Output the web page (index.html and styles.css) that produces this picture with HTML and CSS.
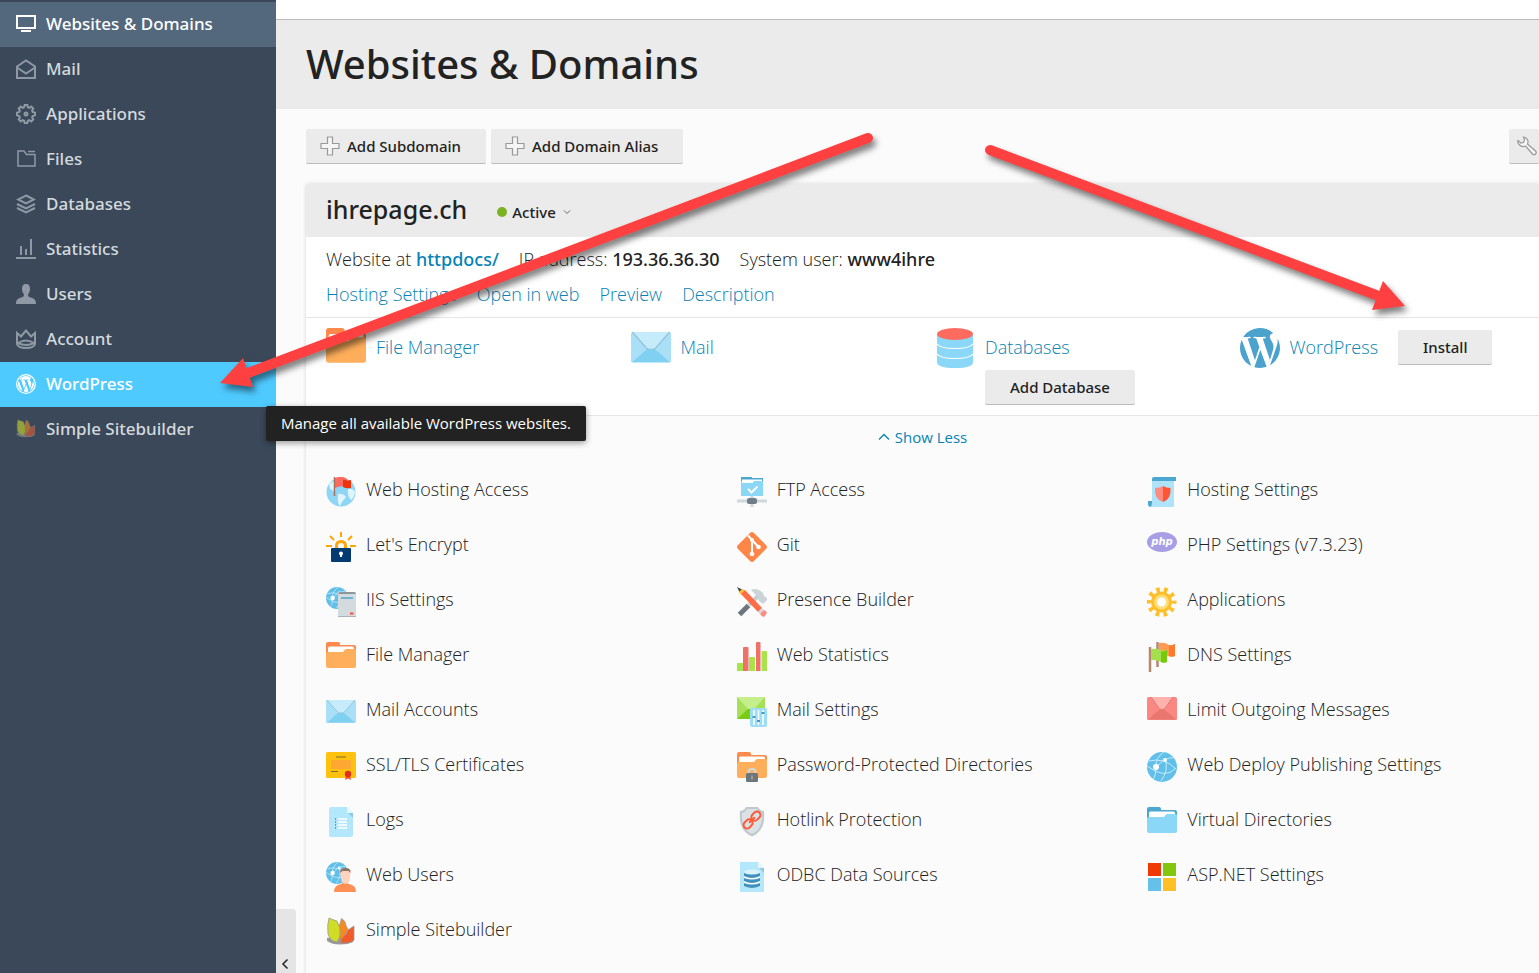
FILE: index.html
```html
<!DOCTYPE html>
<html lang="en">
<head>
  <meta charset="UTF-8" />
  <title>Websites &amp; Domains</title>
  <meta name="viewport" content="width=device-width, initial-scale=1.0"/>
  <link rel="stylesheet" href="styles.css">
</head>
<body>

<!-- Shared icons -->
<svg class="sprite" aria-hidden="true">
  <symbol id="i-folder" viewBox="0 0 30 30">
    <path d="M0 2q0-2 2-2h10q2 0 2 2v1h14q2 0 2 2v8H0z" fill="#ff8a4c"/>
    <path d="M2 6q0-1.500 1.500-1.500h23q1.500 0 1.500 1.500v6H2z" fill="#fff"/>
    <path d="M0 11.500q0-1.500 1.500-1.500H17l2-2.500q.5-.5 1.500-.5h8q1.500 0 1.500 1.500V24q0 2-2 2H2q-2 0-2-2z" fill="#ffaf5b"/>
  </symbol>
  <symbol id="i-folder-blue" viewBox="0 0 30 30">
    <path d="M0 2q0-2 2-2h10q2 0 2 2v1h14q2 0 2 2v8H0z" fill="#4ba7cf"/>
    <path d="M2 6q0-1.500 1.500-1.500h23q1.500 0 1.500 1.500v6H2z" fill="#fff"/>
    <path d="M0 11.500q0-1.500 1.500-1.500H17l2-2.500q.5-.5 1.500-.5h8q1.500 0 1.500 1.500V24q0 2-2 2H2q-2 0-2-2z" fill="#8bd7f7"/>
  </symbol>
  <symbol id="i-mail" viewBox="0 0 30 30">
    <rect y="3" width="30" height="23" rx="1.500" fill="#a9e0f7"/>
    <path d="M1 25.500 12 16h6l11 9.500z" fill="#7fd0f1"/>
    <path d="M1 3h28L18.500 15.500h-7z" fill="#c6ebfb"/>
    <path d="M1 3 11.500 15q1 1 2 1h3q1 0 2-1L29 3" fill="none" stroke="#93c6da"/>
  </symbol>
  <symbol id="i-globe" viewBox="0 0 30 30">
    <circle cx="15" cy="15" r="15" fill="#60c0ea"/>
    <path d="M2 9Q17 5 29 17M0 14q18 14 29 2M9 15Q8 6 17 0M9 15q0 9-3 12M18 7q4 11-4 22M9 15 18 7M17 8q7-3 9-2" fill="none" stroke="#c9eaf9" stroke-width="1"/>
    <circle cx="9" cy="15" r="3" fill="#fff"/><circle cx="18" cy="8" r="2" fill="#fff"/>
  </symbol>
  <symbol id="i-leaves" viewBox="0 0 30 30">
    <path d="M1 21v3q5 3.500 13 3.500T27 25l1-3-8-4z" fill="#999"/>
    <path d="M15.500 1.500q4 2 4.500 7l2 4-7 13-3-12z" fill="#f58a1f" stroke="#999" stroke-width=".8"/>
    <path d="M3 1q4 2 8 3 4 7 3 14-1 5-3 7-7-1-9-8Q1 7 3 1z" fill="#cfdd27" stroke="#999" stroke-width=".8"/>
    <path d="M28 9v14q-4 4-14 3 0-4 6-9l2-4z" fill="#f15a29" stroke="#999" stroke-width=".8"/>
  </symbol>
  <symbol id="i-plus" viewBox="0 0 20 20">
    <path d="M7.500 1h5v6.500H19v5h-6.500V19h-5v-6.500H1v-5h6.500z" fill="#f5f5f5" stroke="#999" stroke-width="1.200"/>
  </symbol>
  <symbol id="i-wp" viewBox="1.200 1.200 21.600 21.600">
    <path fill="currentColor" d="M21.469 6.825c.84 1.537 1.318 3.300 1.318 5.175 0 3.979-2.156 7.456-5.363 9.325l3.295-9.527c.615-1.540.82-2.771.82-3.864 0-.405-.026-.78-.07-1.110m-7.981.105c.647-.03 1.232-.105 1.232-.105.582-.075.514-.93-.067-.899 0 0-1.755.135-2.880.135-1.064 0-2.850-.15-2.850-.15-.585-.03-.661.855-.075.885 0 0 .54.061 1.125.09l1.680 4.605-2.370 7.080L5.354 6.900c.649-.03 1.234-.1 1.234-.1.585-.075.516-.93-.065-.896 0 0-1.746.138-2.874.138-.2 0-.438-.008-.69-.015C4.911 3.150 8.235 1.215 12 1.215c2.809 0 5.365 1.072 7.286 2.833-.046-.003-.091-.009-.141-.009-1.060 0-1.812.923-1.812 1.914 0 .89.513 1.643 1.060 2.531.411.72.89 1.643.89 2.977 0 .915-.354 1.994-.821 3.479l-1.075 3.585-3.900-11.610zM12 22.784c-1.059 0-2.081-.153-3.048-.437l3.237-9.406 3.315 9.087c.024.053.05.101.078.149-1.120.393-2.325.607-3.582.607M1.211 12c0-1.564.336-3.050.935-4.390L7.290 21.709C3.694 19.960 1.212 16.271 1.211 12"/>
  </symbol>
</svg>

<div class="page">
  <nav class="sidebar">
    <a href="#" class="nav-item current">
      <svg class="nav-icon" viewBox="0 0 20 20"><path d="M1 2h18v12H1z" fill="none" stroke="#fff" stroke-width="2"/><path d="M5 17h10" stroke="#fff" stroke-width="2"/></svg>
      Websites &amp; Domains
    </a>
    <a href="#" class="nav-item">
      <svg class="nav-icon line" viewBox="0 0 20 20"><path d="M1 7.500 10 1.500l9 6V19H1zM1 8.500l9 6 9-6"/></svg>
      Mail
    </a>
    <a href="#" class="nav-item">
      <svg class="nav-icon line" viewBox="0 0 20 20"><path d="M8.700 1h2.600l.6 2.200 1.400.6 2-1.200 2 2-1.200 2 .6 1.400 2.300.7v2.600l-2.300.7-.6 1.400 1.200 2-2 2-2-1.200-1.400.6-.6 2.200H8.700l-.6-2.200-1.400-.6-2 1.200-2-2 1.200-2-.6-1.400L1 11.300V8.700L3.300 8l.6-1.400-1.200-2 2-2 2 1.200 1.400-.6z"/><circle cx="10" cy="10" r="1.500"/></svg>
      Applications
    </a>
    <a href="#" class="nav-item">
      <svg class="nav-icon line thin" viewBox="0 0 20 20"><path d="M2 2h6l2.500 3.500H19V17H2zM12 2.500h7"/></svg>
      Files
    </a>
    <a href="#" class="nav-item">
      <svg class="nav-icon line" viewBox="0 0 20 20"><path d="m10 1.500 8 4-8 4-8-4zM1 10l9 4.500 9-4.500M1 14l9 4.500 9-4.500"/></svg>
      Databases
    </a>
    <a href="#" class="nav-item">
      <svg class="nav-icon line" viewBox="0 0 20 20"><path d="M0 19h20M5 7v9M10 10v6M15 0v16"/></svg>
      Statistics
    </a>
    <a href="#" class="nav-item">
      <svg class="nav-icon" viewBox="0 0 20 20"><path d="M10 0c3 0 4 2 4 5 0 2.500-1 4-2 5.500 0 2 1 2.500 4 3.500 2.500.8 4 2 4 6H0c0-4 1.500-5.200 4-6 3-1 4-1.500 4-3.500C7 9 6 7.500 6 5c0-3 1-5 4-5z" fill="#8e99a5"/></svg>
      Users
    </a>
    <a href="#" class="nav-item">
      <svg class="nav-icon line" viewBox="0 0 20 20"><path d="m1 4 4 3.500 5-6 5 6L19 4v11q-1 4-9 4t-9-4zM2 14q8-5 16 0-8 4-16 0z"/></svg>
      Account
    </a>
    <a href="#" class="nav-item selected">
      <svg class="nav-icon" viewBox="0 0 24 24"><circle cx="12" cy="12" r="11.200" fill="none" stroke="#fff" stroke-width="1.600"/><use href="#i-wp" x="2.500" y="2.500" width="19" height="19"/></svg>
      WordPress
      <span class="tooltip" role="tooltip">Manage all available WordPress websites.</span>
    </a>
    <a href="#" class="nav-item">
      <svg class="nav-icon faded"><use href="#i-leaves"/></svg>
      Simple Sitebuilder
    </a>
  </nav>

  <main class="main">
    <div class="topbar"></div>
    <header class="heading">
      <h1>Websites &amp; Domains</h1>
    </header>

    <div class="toolbar">
      <button class="btn"><svg class="btn-icon"><use href="#i-plus"/></svg>Add Subdomain</button>
      <button class="btn"><svg class="btn-icon"><use href="#i-plus"/></svg>Add Domain Alias</button>
      <button class="btn settings" aria-label="Settings">
        <svg class="btn-icon" viewBox="0 0 20 20"><path d="M6.500 1q4 1 4.500 4 .2 1.500-.5 3l8 7q1.500 1.500 0 3t-3 0l-7-8q-3.500 1.500-6-1T1 4.500L4 7l2.500-.5L7.500 4z" fill="#f5f5f5" stroke="#999" stroke-width="1.200"/></svg>
      </button>
    </div>

    <section class="card">
      <div class="card-header">
        <h2>ihrepage.ch</h2>
        <button class="status"><span class="dot"></span>Active<svg class="caret" viewBox="0 0 8 8"><path d="m1 2.500 3 3 3-3" fill="none" stroke="#666"/></svg></button>
      </div>

      <div class="info">
        <div class="info-row">
          <span>Website at <a href="#"><b>httpdocs/</b></a></span>
          <span>IP address: <b>193.36.36.30</b></span>
          <span>System user: <b>www4ihre</b></span>
        </div>
        <div class="info-row">
          <a href="#">Hosting Settings</a>
          <a href="#">Open in web</a>
          <a href="#">Preview</a>
          <a href="#">Description</a>
        </div>
      </div>

      <div class="quick">
        <div class="quick-item">
          <svg class="quick-icon"><use href="#i-folder"/></svg>
          <a href="#">File Manager</a>
        </div>
        <div class="quick-item">
          <svg class="quick-icon"><use href="#i-mail"/></svg>
          <a href="#">Mail</a>
        </div>
        <div class="quick-item">
          <svg class="quick-icon" viewBox="0 0 40 40">
            <path d="M2 6v28q0 6 18 6t18-6V6z" fill="#8bd7f7"/>
            <ellipse cx="20" cy="6" rx="18" ry="6" fill="#ff6c5f"/>
            <path d="M2 16q3 4.500 18 4.500T38 16M2 26q3 4.500 18 4.500T38 26" fill="none" stroke="#fff" stroke-width="1.200"/>
          </svg>
          <div class="quick-stack">
            <a href="#">Databases</a>
            <button class="btn">Add Database</button>
          </div>
        </div>
        <div class="quick-item">
          <svg class="quick-icon wp"><use href="#i-wp"/></svg>
          <a href="#">WordPress</a>
          <button class="btn install">Install</button>
        </div>
      </div>

      <div class="more">
        <button class="show-less"><svg class="chevron" viewBox="0 0 12 12"><path d="m1 8.500 5-5 5 5" fill="none" stroke="#0783b5" stroke-width="1.300"/></svg>Show Less</button>

        <div class="tools">
          <a href="#" class="tool">
            <svg class="tool-icon" viewBox="0 0 30 30">
              <circle cx="15" cy="15" r="14.500" fill="#8dd6f5"/>
              <path d="M3 7q5-5 7 0l-1 8-5-3zM12 17q5-1 8 3l-4 5-2 4q-3-3-2-12zM22 12q5-1 7 3-1 6-4 8-4-4-3-11zM13 2q6-3 9 2l-6 2z" fill="#dff4fc"/>
              <path d="M9 1q7-3 12 1v8q-6-2-12 1z" fill="#ff6c5f"/><path d="M17 2.500q4 1.500 8 .5v8q-5 1-8-1z" fill="#ee330a"/>
              <path d="M8.500 0v19" stroke="#a8705a" stroke-width="1.500"/>
            </svg>
            Web Hosting Access
          </a>
          <a href="#" class="tool">
            <svg class="tool-icon" viewBox="0 0 30 30">
              <path d="M4 0h11v1h11v5H4z" fill="#4ba7cf"/><path d="M4 4h22v15H4z" fill="#8bd7f7"/><path d="M5 2.500h20V4h-8l-1.500 2H5z" fill="#fff"/>
              <path d="m11 12 3.500 3.500 6-6" fill="none" stroke="#fff" stroke-width="2"/>
              <path d="M15 19v11M0 24h30" stroke="#cfd8dc" stroke-width="3"/><rect x="10" y="21" width="10" height="6" rx="2" fill="#6f7f87"/>
            </svg>
            FTP Access
          </a>
          <a href="#" class="tool">
            <svg class="tool-icon" viewBox="0 0 30 30">
              <path d="M1 24h5v6H4q-3 0-3-3z" fill="#4ba7cf"/><path d="M5 1h22v29H3q2-1 2-4z" fill="#aee3f9"/><path d="M5 2q0-2 2-2h22v4H5z" fill="#4ba7cf"/>
              <path d="M8 11q5 0 8-2v16q-9-3-8-14z" fill="#ff8a80"/><path d="M16 9q3 2 7.500 2 1 11-7.500 14z" fill="#ff5436"/>
            </svg>
            Hosting Settings
          </a>

          <a href="#" class="tool">
            <svg class="tool-icon" viewBox="0 0 30 30">
              <path d="M15 0v5M4 4l4 4M26 4l-4 4M0 14h6M24 14h6" stroke="#ffa409" stroke-width="2"/>
              <path d="M10.500 17v-3q0-4.500 4.500-4.500t4.500 4.500v3" fill="none" stroke="#ffa409" stroke-width="3"/>
              <rect x="5" y="16" width="20" height="14" rx="1" fill="#043a72"/><path d="M15 20v5" stroke="#fff" stroke-width="2"/><circle cx="15" cy="21.500" r="2" fill="#fff"/>
            </svg>
            Let's Encrypt
          </a>
          <a href="#" class="tool">
            <svg class="tool-icon" viewBox="0 0 30 30">
              <path d="M15 0q1 0 2 1l12 12q2 2 0 4L17 29q-2 2-4 0L1 17q-2-2 0-4L13 1q1-1 2-1z" fill="#ff8549"/>
              <path d="M11 3.500 15 8v14M15 8l6.500 7" stroke="#fff" stroke-width="2" fill="none"/><circle cx="15" cy="8" r="2" fill="#fff"/><circle cx="15" cy="22" r="2.300" fill="#fff"/><circle cx="21.500" cy="15" r="2.300" fill="#fff"/>
            </svg>
            Git
          </a>
          <a href="#" class="tool">
            <svg class="tool-icon" viewBox="0 0 30 30">
              <ellipse cx="15" cy="10" rx="15" ry="10" fill="#a89ee6"/><text x="15" y="13" class="php" text-anchor="middle">php</text>
            </svg>
            PHP Settings (v7.3.23)
          </a>

          <a href="#" class="tool">
            <svg class="tool-icon" viewBox="0 0 30 30">
              <use href="#i-globe" width="22" height="22"/>
              <path d="M12 7q0-2 2-2h14q2 0 2 2v23H12z" fill="#d3dbdf"/><path d="M12 7q0-2 2-2h14q2 0 2 2z" fill="#8c979d"/><path d="M12 29.500h18" stroke="#aab3b8"/><path d="M15 11h12" stroke="#4ba7cf" stroke-width="1.500"/><path d="M24 26.500h3.500" stroke="#ff4b3e" stroke-width="2"/>
            </svg>
            IIS Settings
          </a>
          <a href="#" class="tool">
            <svg class="tool-icon" viewBox="0 0 30 30">
              <path d="m2.500 27.500 9-9" stroke="#6a777e" stroke-width="5"/><path d="m12 18 9-9" stroke="#c3ccd1" stroke-width="4"/>
              <path d="M14 3q6-3 12 3l1 3 3 2v2l-4 4-4-3q-1-4-4-7z" fill="#cbd3d7"/>
              <path d="M0 0 6 3 3 6z" fill="#37474f"/><path d="m2 5 3-3 3 1-4 5z" fill="#ffc02c"/><path d="m4 7 4-4 17 18-4 4z" fill="#ff6c47"/><path d="m21 25 4-4 2 2-4 4z" fill="#cfd8dc"/><path d="m23 27 4-4q3 1.500 3 3l-3 4q-2 0-4-3z" fill="#ff8a80"/>
            </svg>
            Presence Builder
          </a>
          <a href="#" class="tool">
            <svg class="tool-icon" viewBox="0 0 30 30">
              <circle cx="14.500" cy="15" r="12" fill="none" stroke="#ffbf2b" stroke-width="6" stroke-dasharray="3.500 4.040" stroke-dashoffset="1.750"/>
              <circle cx="14.500" cy="15" r="8.500" fill="#fff" stroke="#ffbf2b" stroke-width="4"/><circle cx="14.500" cy="15" r="6" fill="#fff" stroke="#ffdd7a" stroke-width="3"/>
            </svg>
            Applications
          </a>

          <a href="#" class="tool">
            <svg class="tool-icon"><use href="#i-folder"/></svg>
            File Manager
          </a>
          <a href="#" class="tool">
            <svg class="tool-icon" viewBox="0 0 30 30">
              <path d="M0 22q0-1 1-1h5v8H0zM12 16q0-1 1-1h4q1 0 1 1v13h-6zM24.500 10q0-1 1-1H29q1 0 1 1v19h-5.500z" fill="#a9e34b"/>
              <path d="M6 6q0-1 1-1h3.500q1 0 1 1v23H6zM19 1q0-1 1-1h2.500q1 0 1 1v28H19z" fill="#f0706a"/>
            </svg>
            Web Statistics
          </a>
          <a href="#" class="tool">
            <svg class="tool-icon" viewBox="0 0 30 30">
              <path d="M10.500 0v25M3 5v25" stroke="#b5886f" stroke-width="2.500"/>
              <path d="M12 1q6-1 10 2 3 1 6-1v12q-5 2-9-1l-7-1z" fill="#ff9c54"/><path d="M22 3.500q3 0 6-1.500v12q-3 1-6 0z" fill="#ff7a2e"/>
              <path d="M4 7q6-1 10 1 3 1.500 6 0v12q-5 2-8-1-4-1.500-8-1z" fill="#a5df50"/><path d="M14 9.500q3 .5 6-1.500v12q-3 1.500-6 0z" fill="#76c90f"/>
            </svg>
            DNS Settings
          </a>

          <a href="#" class="tool">
            <svg class="tool-icon"><use href="#i-mail"/></svg>
            Mail Accounts
          </a>
          <a href="#" class="tool">
            <svg class="tool-icon" viewBox="0 0 30 30">
              <rect width="28" height="22" rx="1" fill="#a6df58"/><path d="M0 22 11 12h6l11 10z" fill="#79cc14"/><path d="M0 0h28L17 12h-6z" fill="#c5ef8c"/>
              <rect x="13" y="11" width="17" height="19" rx="2" fill="#9eddf7"/>
              <path d="M17 13v15M21.500 13v15M26 13v15" stroke="#fff" stroke-width="1.500"/><path d="M15.500 20h3M20 24h3M24.500 16h3" stroke="#3f9cc6" stroke-width="2"/>
            </svg>
            Mail Settings
          </a>
          <a href="#" class="tool">
            <svg class="tool-icon" viewBox="0 0 30 30">
              <rect width="30" height="23" rx="1.500" fill="#fa8781"/><path d="M1 22.500 12 13h6l11 9.500z" fill="#e9766f"/><path d="M4 0h22l-8 12h-6z" fill="#ffb1ab"/><path d="m4 0 8 11.500q1 1 3 1t3-1L26 0" fill="none" stroke="#dc7670"/>
            </svg>
            Limit Outgoing Messages
          </a>

          <a href="#" class="tool">
            <svg class="tool-icon" viewBox="0 0 30 30">
              <rect width="30" height="26" rx="1.500" fill="#fec10d"/><rect x="5" y="8" width="20" height="9" fill="#ffa733"/>
              <path d="M10 5h10M5 19.500h7" stroke="#7b6a3a"/><path d="m20 23-1 5 3-1.500L25 28l-1-5z" fill="#ff5436"/><circle cx="22" cy="22" r="3.200" fill="#dc2f1c"/>
            </svg>
            SSL/TLS Certificates
          </a>
          <a href="#" class="tool">
            <svg class="tool-icon" viewBox="0 0 30 30">
              <use href="#i-folder" width="30" height="30"/>
              <path d="M11.500 22v-2q0-3 3.500-3t3.500 3v2" fill="none" stroke="#cfd8dc" stroke-width="2"/><rect x="9" y="21" width="12" height="9" rx="1.500" fill="#6a777e"/><path d="M15 23.500v4" stroke="#c5a07a" stroke-width="1.500"/>
            </svg>
            Password-Protected Directories
          </a>
          <a href="#" class="tool">
            <svg class="tool-icon"><use href="#i-globe"/></svg>
            Web Deploy Publishing Settings
          </a>

          <a href="#" class="tool">
            <svg class="tool-icon" viewBox="0 0 30 30">
              <path d="M3 2q0-2 2-2h16l6 6v22q0 2-2 2H5q-2 0-2-2z" fill="#b3e7fb"/><path d="M21 0v5q0 1 1 1h5z" fill="#e5f7fd"/><path d="m22 6 5 5V6z" fill="#91c9df"/>
              <path d="M12 12h9M12 15h9M12 18h9M12 21h9" stroke="#fff" stroke-width="1.500"/><path d="M9.500 11v11" stroke="#6a9fb5" stroke-dasharray="2 1"/>
            </svg>
            Logs
          </a>
          <a href="#" class="tool">
            <svg class="tool-icon" viewBox="0 0 30 30">
              <path d="M3 4q4 0 6-4h12q2 4 6 4 2 20-12 25.500Q1 24 3 4z" fill="#c0c9ce"/><path d="M5 6q4-1 5-4h10q1 3 5 4 1 16-10 21Q4 22 5 6z" fill="#dbe2e5"/>
              <g fill="none" stroke="#ff5b39" stroke-width="2" transform="rotate(-45 15 13)"><rect x="4.500" y="9.500" width="10" height="7" rx="3.500"/><rect x="15.500" y="9.500" width="10" height="7" rx="3.500"/><path d="M11 13h8"/></g>
            </svg>
            Hotlink Protection
          </a>
          <a href="#" class="tool">
            <svg class="tool-icon"><use href="#i-folder-blue"/></svg>
            Virtual Directories
          </a>

          <a href="#" class="tool">
            <svg class="tool-icon" viewBox="0 0 30 30">
              <use href="#i-globe" width="22" height="22"/>
              <path d="M8 30q0-7 7-8l4-2 4 2q7 1 7 8z" fill="#ff8f55"/><path d="M14 10q0-4 5.500-4t5 4l-1 9q-4 6-8 0z" fill="#ffd3bd"/><path d="M14 11q0-5 5.500-5t5 5l-2-2h-6z" fill="#8b7466"/>
            </svg>
            Web Users
          </a>
          <a href="#" class="tool">
            <svg class="tool-icon" viewBox="0 0 30 30">
              <path d="M3 0h18l6 6v24H3z" fill="#b3e7fb"/><path d="M21 0v6h6z" fill="#e5f7fd"/><path d="m22 6 5 5V6z" fill="#91c9df"/>
              <path d="M7 11v13q8 4 16 0V11z" fill="#fff"/><ellipse cx="15" cy="10" rx="8" ry="2.500" fill="#d9f3fd"/>
              <path d="M7 11q8 3 16 0v3q-8 4-16 0zM7 16q8 3 16 0v3q-8 4-16 0zM7 21q8 3 16 0v3q-8 4-16 0z" fill="#3f92bd"/>
            </svg>
            ODBC Data Sources
          </a>
          <a href="#" class="tool">
            <svg class="tool-icon" viewBox="0 0 30 30">
              <path d="M1 1h13v13H1z" fill="#f03a05"/><path d="M16 1h13v13H16z" fill="#83c70d"/><path d="M1 16h13v13H1z" fill="#66c1ea"/><path d="M16 16h13v13H16z" fill="#ffbf26"/>
            </svg>
            ASP.NET Settings
          </a>

          <a href="#" class="tool">
            <svg class="tool-icon"><use href="#i-leaves"/></svg>
            Simple Sitebuilder
          </a>
        </div>
      </div>
    </section>

    <button class="collapse" aria-label="Collapse sidebar">
      <svg class="chevron" viewBox="0 0 12 12"><path d="M8.500 1.500 4 6l4.500 4.500" fill="none" stroke="#222" stroke-width="1.500"/></svg>
    </button>
  </main>
</div>

<!-- Pointer arrows -->
<svg class="arrows" aria-hidden="true">
  <g fill="#ff4040" stroke="#ff4040">
    <path d="M868 138 248 373" stroke-width="10" stroke-linecap="round"/>
    <path d="m220 383 23-25 10 29z" stroke="none"/>
    <path d="m990 150 386 145" stroke-width="10" stroke-linecap="round"/>
    <path d="m1405 306-22-25-11 29z" stroke="none"/>
  </g>
</svg>

</body>
</html>
```
FILE: styles.css
```css
* {
  box-sizing: border-box;
}

body {
  margin: 0;
  background: #fbfbfb;
  color: #222;
  font-family: 'Open Sans', sans-serif;
  font-size: 18px;
  font-weight: 300;
  line-height: 25px;
}

a {
  color: #0783b5;
  text-decoration: none;
}

h1,
h2,
b,
.nav-item,
.btn,
.status {
  font-family: 'Noto Sans', 'Open Sans', sans-serif;
  font-weight: 500;
}

button {
  font-family: inherit;
  color: #222;
  cursor: pointer;
}

svg {
  flex-shrink: 0;
}

.sprite {
  position: absolute;
  width: 0;
  height: 0;
}

.page {
  display: flex;
  height: 100vh;
  overflow: hidden;
}

/* Sidebar */
.sidebar {
  width: 276px;
  flex-shrink: 0;
  padding-top: 2px;
  background: #3a4859;
}

.nav-item {
  position: relative;
  display: flex;
  align-items: center;
  gap: 10px;
  height: 45px;
  padding: 0 0 2px 16px;
  color: #d4d9de;
  font-size: 17px;
}

.nav-item.current {
  background: #53687d;
  color: #fff;
}

.nav-item.selected {
  background: #4fcaff;
  color: #fff;
}

.nav-icon {
  width: 20px;
  height: 20px;
}

.nav-icon.line {
  fill: none;
  stroke: #8e99a5;
  stroke-width: 2;
}

.nav-icon.thin {
  stroke-width: 1.5;
}

.nav-icon.faded {
  opacity: 0.6;
}

.tooltip {
  position: absolute;
  z-index: 2;
  top: 44px;
  left: 266px;
  padding: 5px 15px;
  border-radius: 2px;
  background: #222;
  box-shadow: 0 2px 6px rgba(0,0,0,0.4);
  color: #fff;
  font-family: 'Open Sans', sans-serif;
  font-size: 15px;
  font-weight: 400;
  white-space: nowrap;
}

/* Main */
.main {
  position: relative;
  flex: 1;
  min-width: 0;
}

.topbar {
  height: 20px;
  background: #fff;
  border-bottom: 1px solid #bbb;
}

.heading {
  padding: 16px 30px 18px;
  background: #ebebeb;
}

h1 {
  margin: 0;
  font-size: 40px;
  line-height: 55px;
}

.toolbar {
  display: flex;
  gap: 5px;
  padding: 20px 0 20px 30px;
}

.btn {
  display: flex;
  align-items: center;
  gap: 7px;
  height: 35px;
  padding: 0 25px;
  border: 0;
  border-bottom: 1px solid #bbb;
  border-radius: 2px;
  background: #ebebeb;
  font-size: 15px;
}

.toolbar .btn {
  padding-left: 14px;
}

.toolbar .settings {
  margin-left: auto;
  padding: 0 2px 0 8px;
}

.btn-icon {
  width: 20px;
  height: 20px;
}

/* Domain card */
.card {
  margin-left: 30px;
  background: #fff;
  box-shadow: 0 0 4px rgba(0,0,0,0.15);
}

.card-header {
  display: flex;
  align-items: center;
  gap: 30px;
  height: 53px;
  padding: 0 0 2px 20px;
  background: #ebebeb;
}

h2 {
  margin: 0;
  font-size: 25px;
}

.status {
  display: flex;
  align-items: center;
  gap: 5px;
  padding: 4px 0 0;
  border: 0;
  background: none;
  font-size: 15px;
}

.dot {
  width: 10px;
  height: 10px;
  border-radius: 50%;
  background: #7db124;
}

.caret {
  width: 8px;
  height: 8px;
  margin-left: 2px;
}

.info {
  display: flex;
  flex-direction: column;
  gap: 10px;
  padding: 10px 20px;
  border-bottom: 1px solid #e6e6e6;
}

.info-row {
  display: flex;
  gap: 20px;
}

.quick {
  display: grid;
  grid-template-columns: repeat(4, 1fr);
  column-gap: 5px;
  padding: 10px 0 10px 20px;
  border-bottom: 1px solid #e6e6e6;
}

.quick-item {
  display: flex;
  align-items: flex-start;
  gap: 10px;
  line-height: 38px;
}

.quick-icon {
  width: 40px;
  height: 40px;
}

.quick-icon.wp {
  color: #4ba3cd;
}

.quick-stack {
  display: flex;
  flex-direction: column;
  gap: 4px;
}

.install {
  margin: 2px 0 0 10px;
}

.more {
  padding: 9px 0 40px;
  background: #fbfbfb;
}

.show-less {
  display: flex;
  align-items: center;
  gap: 5px;
  height: 24px;
  margin: 0 auto;
  padding: 0;
  border: 0;
  background: none;
  color: #0783b5;
  font-size: 15px;
}

.chevron {
  width: 12px;
  height: 12px;
}

.tools {
  display: grid;
  grid-template-columns: repeat(3, 1fr);
  gap: 25px 19px;
  padding: 28px 0 0 20px;
}

.tool {
  display: flex;
  gap: 10px;
  height: 30px;
  color: #222;
}

.tool-icon {
  width: 30px;
  height: 30px;
}

.php {
  fill: #fff;
  font-family: 'DejaVu Sans', sans-serif;
  font-size: 10px;
  font-style: italic;
  font-weight: 700;
}

.collapse {
  position: absolute;
  bottom: 0;
  left: 0;
  display: flex;
  align-items: flex-end;
  width: 20px;
  height: 64px;
  padding: 3px;
  border: 0;
  border-radius: 0 4px 0 0;
  background: #e5e5e5;
}

.arrows {
  position: absolute;
  top: 0;
  left: 0;
  z-index: 3;
  width: 100%;
  height: 100%;
  pointer-events: none;
  filter: drop-shadow(3px 5px 3px rgba(0,0,0,0.5));
}
```
